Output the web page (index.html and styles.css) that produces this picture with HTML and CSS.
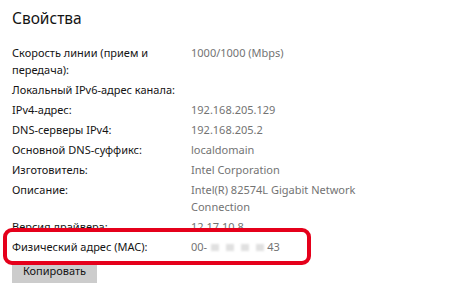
FILE: index.html
```html
<!DOCTYPE html>
<html lang="ru">
<head>
    <meta charset="UTF-8">
    <title>Свойства</title>
    <link rel="stylesheet" href="styles.css">
</head>
<body>
    <h2 class="title">Свойства</h2>

    <div class="props">
        <div class="row">
            <div class="label">Скорость линии (прием и передача):</div>
            <div class="value">1000/1000 (Mbps)</div>
        </div>
        <div class="row">
            <div class="label">Локальный IPv6-адрес канала:</div>
            <div class="value"></div>
        </div>
        <div class="row">
            <div class="label">IPv4-адрес:</div>
            <div class="value">192.168.205.129</div>
        </div>
        <div class="row">
            <div class="label">DNS-серверы IPv4:</div>
            <div class="value">192.168.205.2</div>
        </div>
        <div class="row">
            <div class="label">Основной DNS-суффикс:</div>
            <div class="value">localdomain</div>
        </div>
        <div class="row">
            <div class="label">Изготовитель:</div>
            <div class="value">Intel Corporation</div>
        </div>
        <div class="row">
            <div class="label">Описание:</div>
            <div class="value">Intel(R) 82574L Gigabit Network Connection</div>
        </div>
        <div class="row">
            <div class="label">Версия драйвера:</div>
            <div class="value">12.17.10.8</div>
        </div>
        <!-- выделенная строка -->
        <div class="row mac">
            <div class="label">Физический адрес (MAC):</div>
            <div class="value">00-<span class="blur"></span><span class="blur"></span><span class="blur"></span><span class="blur"></span>43</div>
        </div>
    </div>

    <button class="copy-btn">Копировать</button>
</body>
</html>
```

FILE: styles.css
```css
/* Общие стили */
body {
    margin: 0;
    padding: 0 12px;
    background: #ffffff;
    font-family: 'Noto Sans', 'Open Sans', sans-serif;
    font-size: 11px;
    color: #141414;
}

.title {
    margin: 6px 0 0;
    font-size: 15.5px;
    font-weight: 400;
    line-height: 24px;
}

/* Список свойств */
.props {
    display: flex;
    flex-direction: column;
    gap: 3px;
    margin-top: 14px;
}

.row {
    display: grid;
    grid-template-columns: 179px 172px;
    line-height: 17px;
}

.label {
    padding-right: 4px;
}

.value {
    color: #737373;
}

/* Красная рамка вокруг MAC */
.row.mac {
    position: relative;
    z-index: 1;
    width: 295px;
    margin: -10px 0 0 -9px;
    padding: 6px 0 6px 5px;
    background: #ffffff;
    border: 4px solid #e5001b;
    border-radius: 9px;
}

.blur {
    display: inline-block;
    width: 8px;
    height: 7px;
    margin: 0 3px 0 4px;
    background: #e0e0e0;
    filter: blur(1px);
}

.copy-btn {
    display: block;
    width: 85px;
    height: 25px;
    margin-top: -7px;
    padding: 0;
    border: none;
    background: #cccccc;
    font-family: inherit;
    font-size: 11px;
    color: #141414;
}
```
